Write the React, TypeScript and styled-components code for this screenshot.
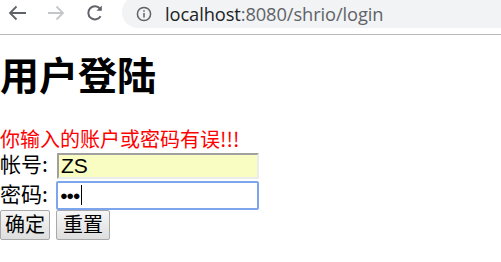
import React from "react";
import styled, { createGlobalStyle } from "styled-components";

const GlobalStyle = createGlobalStyle`
  html, body {
    margin: 0;
    padding: 0;
    background: #ffffff;
    overflow: hidden;
  }
  body {
    font-family: "Noto Sans CJK SC", "Liberation Sans", sans-serif;
  }
`;

const Toolbar = styled.div`
  display: flex;
  align-items: flex-start;
  height: 34px;
  border-bottom: 1px solid #b9b9b9;
  background: #ffffff;
`;

const NavButton = styled.div<{ $left: number }>`
  width: 24px;
  height: 24px;
  margin-left: ${(p) => p.$left}px;
  margin-top: 1px;
  display: flex;
  align-items: center;
  justify-content: center;
`;

const AddressBar = styled.div`
  flex: 1;
  height: 32px;
  margin-top: -4px;
  margin-left: 15px;
  border-radius: 16px 0 0 16px;
  background: #f1f3f4;
  display: flex;
  align-items: center;
  padding-left: 14px;
  padding-top: 3px;
  box-sizing: border-box;
`;

const Url = styled.span`
  margin-left: 13px;
  font-family: "Open Sans", "Liberation Sans", sans-serif;
  font-size: 18.3px;
  color: #5f6368;
  letter-spacing: -0.1px;
`;

const Host = styled.span`
  color: #202124;
`;

const Page = styled.div`
  padding: 0;
`;

const Title = styled.h1`
  margin: 14px 0 30px 0;
  font-size: 39px;
  line-height: 48px;
  font-weight: bold;
  color: #000;
`;

const ErrorText = styled.div`
  color: #ff0000;
  font-size: 20px;
  line-height: 24px;
`;

const Row = styled.div<{ $h: number }>`
  display: flex;
  align-items: center;
  height: ${(p) => p.$h}px;
`;

const Label = styled.span`
  width: 56px;
  font-size: 21px;
  line-height: 22px;
  padding-bottom: 5px;
  color: #000;
  white-space: nowrap;
`;

const Field = styled.div<{ $focus?: boolean }>`
  box-sizing: border-box;
  width: ${(p) => (p.$focus ? 203 : 202)}px;
  height: ${(p) => (p.$focus ? 29 : 26)}px;
  margin-left: ${(p) => (p.$focus ? 0 : 1)}px;
  display: flex;
  align-items: center;
  padding-left: 2px;
  font-family: "Liberation Sans", sans-serif;
  font-size: 21px;
  line-height: 22px;
  color: #000;
  background: ${(p) => (p.$focus ? "#ffffff" : "#fafdc2")};
  border: 2px solid;
  border-color: ${(p) =>
    p.$focus ? "#7ca5ee" : "#a0a0a0 #ececec #ececec #a0a0a0"};
  border-radius: ${(p) => (p.$focus ? "2px" : "0")};
`;

const Dots = styled.span`
  font-size: 13px;
  letter-spacing: -1.5px;
  line-height: 1;
`;

const Caret = styled.span`
  display: inline-block;
  width: 1px;
  height: 20px;
  background: #000;
  margin-left: 2px;
`;

const Button = styled.button<{ $w: number }>`
  box-sizing: border-box;
  width: ${(p) => p.$w}px;
  height: 30px;
  margin-right: 6px;
  padding: 0 0 2px 0;
  font-family: "Noto Sans CJK SC", sans-serif;
  font-size: 20px;
  line-height: 1;
  color: #000;
  background: linear-gradient(#f6f6f6, #dedede);
  border: 1px solid #a9a9a9;
  border-radius: 2px;
`;

const Icon = ({ children }: { children: React.ReactNode }) => (
  <svg width="24" height="24" viewBox="0 0 24 24" fill="none">
    {children}
  </svg>
);

export default function App() {
  return (
    <>
      <GlobalStyle />
      <Toolbar>
        <NavButton $left={5}>
          <Icon>
            <path d="M21 12H5M11.5 5.5L5 12l6.5 6.5" stroke="#5f6368" strokeWidth="1.8" />
          </Icon>
        </NavButton>
        <NavButton $left={15}>
          <Icon>
            <path d="M4 12h15M12.5 5.5L19 12l-6.5 6.5" stroke="#c4c7ca" strokeWidth="1.8" />
          </Icon>
        </NavButton>
        <NavButton $left={15}>
          <Icon>
            <path
              d="M17.6 15.2A6.6 6.6 0 1 1 17 7.6"
              stroke="#5f6368"
              strokeWidth="2"
            />
            <path d="M18.8 4.5v5.3h-5.3z" fill="#5f6368" />
          </Icon>
        </NavButton>
        <AddressBar>
          <svg width="16" height="16" viewBox="0 0 16 16" fill="none">
            <circle cx="8" cy="8" r="6.6" stroke="#5f6368" strokeWidth="1.5" />
            <rect x="7.25" y="7" width="1.5" height="4.5" fill="#5f6368" />
            <rect x="7.25" y="4.3" width="1.5" height="1.5" fill="#5f6368" />
          </svg>
          <Url>
            <Host>localhost</Host>:8080/shrio/login
          </Url>
        </AddressBar>
      </Toolbar>
      <Page>
        <Title>用户登陆</Title>
        <ErrorText>你输入的账户或密码有误!!!</ErrorText>
        <Row $h={29}>
          <Label>帐号:</Label>
          <Field>ZS</Field>
        </Row>
        <Row $h={30}>
          <Label>密码:</Label>
          <Field $focus>
            <Dots>●●●</Dots>
            <Caret />
          </Field>
        </Row>
        <Row $h={30}>
          <Button $w={50}>确定</Button>
          <Button $w={54}>重置</Button>
        </Row>
      </Page>
    </>
  );
}
